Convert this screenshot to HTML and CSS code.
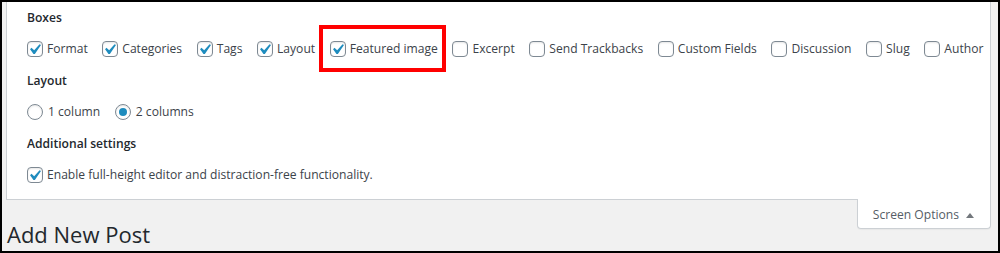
FILE: index.html
```html
<!DOCTYPE html>
<html lang="en">
<head>
    <meta charset="UTF-8">
    <meta name="viewport" content="width=device-width, initial-scale=1.0">
    <title>Add New Post</title>
    <link rel="stylesheet" href="styles.css">
</head>
<body>
    <div class="frame">
        <div class="screen-meta">
            <fieldset class="prefs">
                <legend>Boxes</legend>
                <div class="options">
                    <label class="opt"><span class="box checked"><svg viewBox="0 0 20 20"><path d="M14.83 4.89l1.34.94-5.81 8.38H9.02L5.78 9.67l1.34-1.25 2.57 2.4z"/></svg></span>Format</label>
                    <label class="opt"><span class="box checked"><svg viewBox="0 0 20 20"><path d="M14.83 4.89l1.34.94-5.81 8.38H9.02L5.78 9.67l1.34-1.25 2.57 2.4z"/></svg></span>Categories</label>
                    <label class="opt"><span class="box checked"><svg viewBox="0 0 20 20"><path d="M14.83 4.89l1.34.94-5.81 8.38H9.02L5.78 9.67l1.34-1.25 2.57 2.4z"/></svg></span>Tags</label>
                    <label class="opt"><span class="box checked"><svg viewBox="0 0 20 20"><path d="M14.83 4.89l1.34.94-5.81 8.38H9.02L5.78 9.67l1.34-1.25 2.57 2.4z"/></svg></span>Layout</label>
                    <label class="opt callout"><span class="box checked"><svg viewBox="0 0 20 20"><path d="M14.83 4.89l1.34.94-5.81 8.38H9.02L5.78 9.67l1.34-1.25 2.57 2.4z"/></svg></span>Featured image</label>
                    <label class="opt"><span class="box"></span>Excerpt</label>
                    <label class="opt"><span class="box"></span>Send Trackbacks</label>
                    <label class="opt"><span class="box"></span>Custom Fields</label>
                    <label class="opt"><span class="box"></span>Discussion</label>
                    <label class="opt"><span class="box"></span>Slug</label>
                    <label class="opt"><span class="box"></span>Author</label>
                </div>
            </fieldset>

            <fieldset class="prefs">
                <legend>Layout</legend>
                <div class="options">
                    <label class="opt"><span class="radio"></span>1 column</label>
                    <label class="opt"><span class="radio checked"></span>2 columns</label>
                </div>
            </fieldset>

            <fieldset class="prefs">
                <legend>Additional settings</legend>
                <div class="options">
                    <label class="opt"><span class="box checked"><svg viewBox="0 0 20 20"><path d="M14.83 4.89l1.34.94-5.81 8.38H9.02L5.78 9.67l1.34-1.25 2.57 2.4z"/></svg></span>Enable full-height editor and distraction-free functionality.</label>
                </div>
            </fieldset>
        </div>

        <div class="title-bar">
            <h1>Add New Post</h1>
            <button class="tab">Screen Options<span class="arrow"></span></button>
        </div>
    </div>
</body>
</html>
```

FILE: styles.css
```css
:root {
    --text-color: #3c434a;
    --heading-color: #23282d;
    --border-color: #ccd0d4;
    --control-border: #7e8993;
    --check-color: #1e8cbe;
    --page-bg: #f1f1f1;
}

* {
    box-sizing: border-box;
}

body {
    margin: 0;
    font-family: 'Open Sans', 'Noto Sans', sans-serif;
    font-size: 12.1px;
    color: var(--text-color);
    background: #fff;
}

.frame {
    width: 1000px;
    height: 253px;
    border: 2px solid #000;
    padding: 0 7px 0 4px;
    background: var(--page-bg);
    overflow: hidden;
}

/* options panel */
.screen-meta {
    background: #fff;
    border: 1px solid var(--border-color);
    border-top: none;
    padding: 6px 20px 8px 20px;
}

.prefs {
    border: none;
    margin: 0 0 6px;
    padding: 0;
    min-width: 0;
}

.prefs:last-child {
    margin-bottom: 0;
}

.prefs legend {
    padding: 0;
    font-weight: 600;
    line-height: 20px;
    color: var(--heading-color);
}

.options {
    display: flex;
    align-items: center;
    gap: 14.6px;
    height: 32px;
    margin-top: 5px;
    white-space: nowrap;
}

.opt {
    display: inline-flex;
    align-items: center;
    line-height: 20px;
    position: relative;
}

.box,
.radio {
    flex: none;
    width: 16px;
    height: 16px;
    margin-right: 4px;
    border: 1px solid var(--control-border);
    background: #fff;
    position: relative;
    box-shadow: inset 0 1px 2px rgba(0,0,0,0.1);
}

.box {
    border-radius: 4px;
}

.box svg {
    position: absolute;
    left: -4px;
    top: -3px;
    width: 21px;
    height: 21px;
    fill: var(--check-color);
}

.radio {
    border-radius: 50%;
    margin-right: 5px;
}

.radio.checked::before {
    content: '';
    position: absolute;
    left: 3px;
    top: 3px;
    width: 8px;
    height: 8px;
    border-radius: 50%;
    background: var(--check-color);
}

/* red annotation round one option */
.callout::after {
    content: '';
    position: absolute;
    left: -11px;
    right: -8px;
    top: -14px;
    bottom: -13px;
    border: 4px solid #f00;
}

/* title row */
.title-bar {
    display: flex;
    justify-content: space-between;
    align-items: flex-start;
}

h1 {
    margin: 0;
    padding: 19px 0 0 1px;
    font-size: 22px;
    font-weight: 400;
    line-height: 30px;
    color: var(--heading-color);
}

.tab {
    margin-top: -1px;
    padding: 6px 16px 3px 15px;
    font-family: inherit;
    font-size: 12.1px;
    line-height: 20px;
    color: #555d66;
    background: #fff;
    border: 1px solid var(--border-color);
    border-top: none;
    border-radius: 0 0 4px 4px;
    box-shadow: 0 1px 1px rgba(0,0,0,0.04);
    display: inline-flex;
    align-items: center;
}

.arrow {
    margin-left: 7px;
    width: 0;
    height: 0;
    border-left: 4px solid transparent;
    border-right: 4px solid transparent;
    border-bottom: 5px solid #72777c;
}
```
